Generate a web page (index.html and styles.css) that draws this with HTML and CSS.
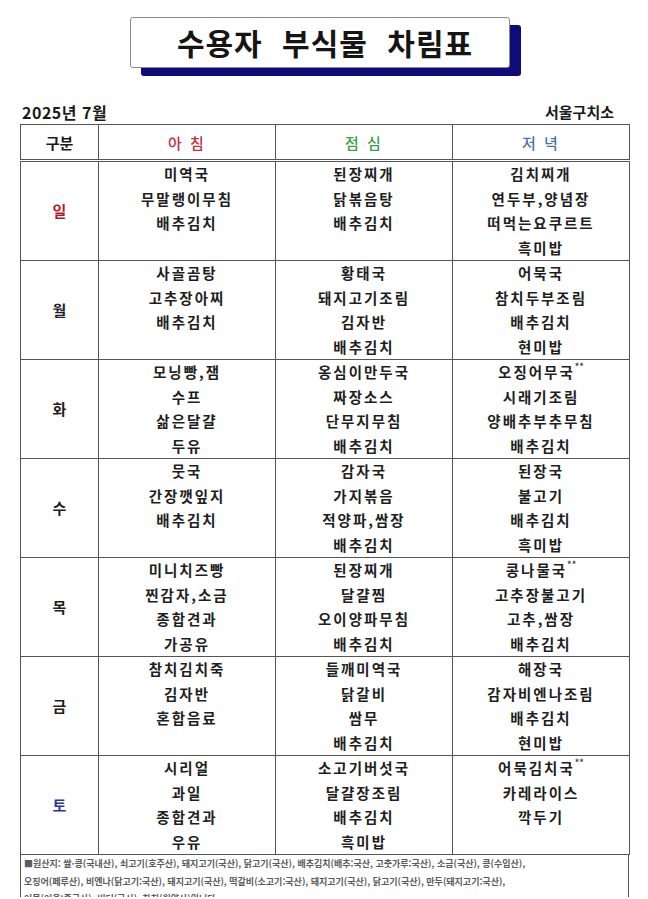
FILE: index.html
```html
<!DOCTYPE html>
<html lang="ko">
<head>
<meta charset="utf-8">
<title>수용자 부식물 차림표</title>
<link rel="stylesheet" href="styles.css">
</head>
<body>
<div class="title-wrap">
  <div class="title-box">수용자 부식물 차림표</div>
</div>
<div class="meta">
  <span class="month">2025년 7월</span>
  <span class="org">서울구치소</span>
</div>
<table class="menu">
  <colgroup>
    <col class="c-day"><col class="c-meal"><col class="c-meal"><col class="c-meal">
  </colgroup>
  <thead>
    <tr>
      <th class="h-day">구분</th>
      <th class="h-am">아 침</th>
      <th class="h-noon">점 심</th>
      <th class="h-pm">저 녁</th>
    </tr>
  </thead>
  <tbody>
    <tr>
      <td class="day sun">일</td>
      <td>미역국<br>무말랭이무침<br>배추김치</td>
      <td>된장찌개<br>닭볶음탕<br>배추김치</td>
      <td>김치찌개<br>연두부,양념장<br>떠먹는요쿠르트<br>흑미밥</td>
    </tr>
    <tr>
      <td class="day">월</td>
      <td>사골곰탕<br>고추장아찌<br>배추김치</td>
      <td>황태국<br>돼지고기조림<br>김자반<br>배추김치</td>
      <td>어묵국<br>참치두부조림<br>배추김치<br>현미밥</td>
    </tr>
    <tr>
      <td class="day">화</td>
      <td>모닝빵,잼<br>수프<br>삶은달걀<br>두유</td>
      <td>옹심이만두국<br>짜장소스<br>단무지무침<br>배추김치</td>
      <td>오징어무국<span class="mark">**</span><br>시래기조림<br>양배추부추무침<br>배추김치</td>
    </tr>
    <tr>
      <td class="day">수</td>
      <td>뭇국<br>간장깻잎지<br>배추김치</td>
      <td>감자국<br>가지볶음<br>적양파,쌈장<br>배추김치</td>
      <td>된장국<br>불고기<br>배추김치<br>흑미밥</td>
    </tr>
    <tr>
      <td class="day">목</td>
      <td>미니치즈빵<br>찐감자,소금<br>종합견과<br>가공유</td>
      <td>된장찌개<br>달걀찜<br>오이양파무침<br>배추김치</td>
      <td>콩나물국<span class="mark">**</span><br>고추장불고기<br>고추,쌈장<br>배추김치</td>
    </tr>
    <tr>
      <td class="day">금</td>
      <td>참치김치죽<br>김자반<br>혼합음료</td>
      <td>들깨미역국<br>닭갈비<br>쌈무<br>배추김치</td>
      <td>해장국<br>감자비엔나조림<br>배추김치<br>현미밥</td>
    </tr>
    <tr>
      <td class="day sat">토</td>
      <td>시리얼<br>과일<br>종합견과<br>우유</td>
      <td>소고기버섯국<br>달걀장조림<br>배추김치<br>흑미밥</td>
      <td>어묵김치국<span class="mark">**</span><br>카레라이스<br>깍두기</td>
    </tr>
  </tbody>
</table>
<div class="note">
  <div>■원산지: 쌀·콩(국내산), 쇠고기(호주산), 돼지고기(국산), 닭고기(국산), 배추김치(배추:국산, 고춧가루:국산), 소금(국산), 콩(수입산),</div>
  <div>오징어(페루산), 비엔나(닭고기:국산), 돼지고기(국산), 떡갈비(소고기:국산), 돼지고기(국산), 닭고기(국산), 만두(돼지고기:국산),</div>
  <div class="last">어묵(어육:중국산), 버터(국산), 참치(원양산)입니다.</div>
</div>
</body>
</html>
```
FILE: styles.css
```css
html, body {
  margin: 0;
  padding: 0;
  background: #ffffff;
}
body {
  font-family: "Noto Sans CJK KR", "Noto Sans", sans-serif;
  color: #1e1e1e;
  width: 648px;
  height: 899px;
  overflow: hidden;
}
.title-wrap {
  padding-top: 17px;
  padding-left: 130px;
  display: flex;
}
.title-box {
  width: 368px;
  height: 49px;
  padding-left: 10px;
  border: 1px solid #8a8a8a;
  border-radius: 3px;
  box-shadow: 11px 8px 0 #0d0c78;
  background: #ffffff;
  font-size: 30px;
  font-weight: 700;
  line-height: 49px;
  letter-spacing: 1px;
  word-spacing: 10px;
  text-align: center;
  color: #151515;
}
.meta {
  margin-top: 34px;
  padding: 0 34px 0 22px;
  display: flex;
  justify-content: space-between;
  align-items: center;
  font-weight: 700;
  line-height: 20px;
  height: 20px;
  color: #1a1a1a;
}
.month {
  font-size: 16px;
  letter-spacing: 0.5px;
}
.org {
  font-size: 15px;
}
.menu {
  margin-top: 2px;
  margin-left: 20px;
  width: 609px;
  table-layout: fixed;
  border-collapse: collapse;
}
.c-day { width: 78px; }
.c-meal { width: 177px; }
.menu th, .menu td {
  border: 1px solid #555555;
  padding: 0;
  text-align: center;
}
.menu th {
  height: 34px;
  font-size: 15px;
  font-weight: 500;
  letter-spacing: 2px;
  border-bottom: 3px double #555555;
}
.h-day { color: #1a1a1a; font-weight: 700 !important; letter-spacing: 0 !important; }
.h-am { color: #c3303b; }
.h-noon { color: #3c9f43; }
.h-pm { color: #4d72aa; }
.menu td {
  height: 98px;
  vertical-align: top;
  font-size: 14.5px;
  font-weight: 700;
  line-height: 24.5px;
  letter-spacing: 2px;
  color: #1e1e1e;
}
.menu td.day {
  vertical-align: middle;
  font-size: 15px;
  letter-spacing: 0;
}
.sun { color: #b01a2c !important; }
.sat { color: #2b379b !important; }
.mark {
  font-size: 9px;
  vertical-align: top;
  line-height: 14px;
  letter-spacing: 0;
  color: #444;
}
.note {
  margin-left: 20px;
  width: 601px;
  height: 42px;
  border-left: 1px solid #555555;
  border-right: 1px solid #555555;
  padding: 0 3px 0 3px;
  font-size: 9px;
  font-weight: 700;
  line-height: 18px;
  color: #5c5c5c;
  white-space: nowrap;
  overflow: hidden;
}
.note .last {
  line-height: 9px;
  height: 6px;
  padding-top: 3px;
  overflow: hidden;
}
```
